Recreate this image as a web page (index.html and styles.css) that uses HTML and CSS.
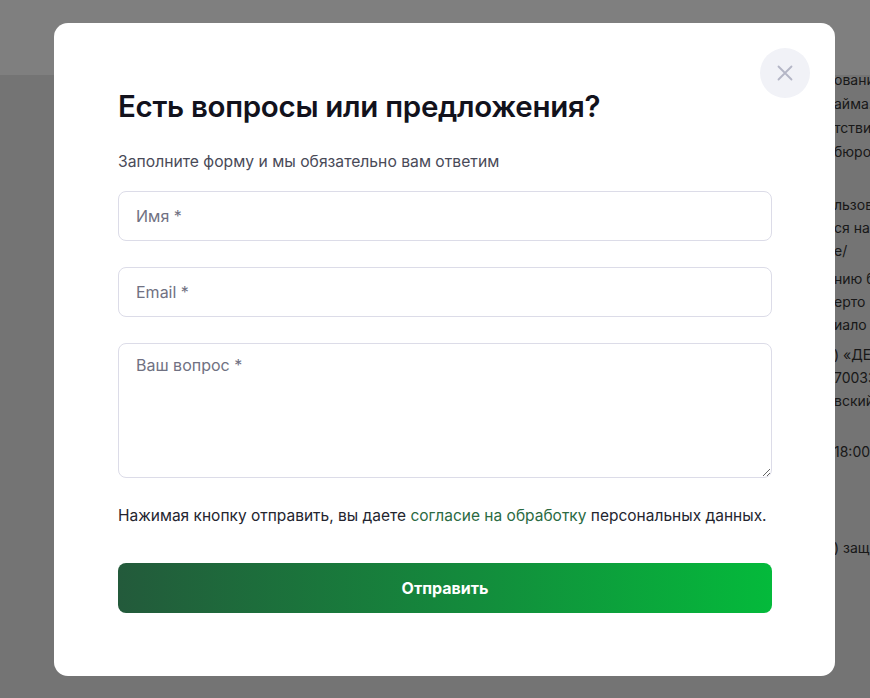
FILE: index.html
```html
<!DOCTYPE html>
<html lang="ru">
<head>
    <meta charset="UTF-8">
    <meta name="viewport" content="width=device-width, initial-scale=1.0">
    <title>Есть вопросы или предложения?</title>
    <link rel="stylesheet" href="styles.css">
</head>
<body>
<!-- Страница под модалкой -->
<div class="page">
    <header class="site-header"></header>
    <div class="page-text">
        <p class="b1">ования<br>айма.<br>тствии<br>бюро</p>
        <p class="b2">льзов<br>ся на<br>e/</p>
        <p class="b3">нию б<br>ерто<br>иало</p>
        <p class="b4">) «ДЕ<br>70033<br>вский</p>
        <p class="b5">18:00</p>
        <p class="b6">) защ</p>
    </div>
</div>

<!-- Затемнение + модалка -->
<div class="overlay">
    <div class="modal">
        <button class="close-btn" aria-label="Закрыть">
            <svg width="16" height="16" viewBox="0 0 16 16" fill="none">
                <path d="M1.5 1.5L14.5 14.5M14.5 1.5L1.5 14.5" stroke="#b4b6c6" stroke-width="1.8" stroke-linecap="round"/>
            </svg>
        </button>

        <h2 class="modal-title">Есть вопросы или предложения?</h2>
        <p class="modal-subtitle">Заполните форму и мы обязательно вам ответим</p>

        <form class="form">
            <input class="field" type="text" placeholder="Имя *">
            <input class="field" type="email" placeholder="Email *">
            <textarea class="field field-area" placeholder="Ваш вопрос *"></textarea>

            <p class="consent">Нажимая кнопку отправить, вы даете <a href="#">согласие на обработку</a> персональных данных.</p>

            <button class="submit-btn" type="button">Отправить</button>
        </form>
    </div>
</div>
</body>
</html>
```

FILE: styles.css
```css
/* Reset */
* {
    margin: 0;
    padding: 0;
    box-sizing: border-box;
}

body {
    font-family: Inter, "Noto Sans", sans-serif;
    background: #e8e8e8;
    overflow: hidden;
    height: 698px;
}

/* Страница на фоне */
.site-header {
    height: 75px;
    background: #fff;
}

.page-text {
    padding-left: 834px;
    white-space: nowrap;
    font-size: 14px;
    line-height: 23px;
    color: #333;
}

.page-text .b1 { margin-top: -7px; line-height: 24px; }
.page-text .b2 { margin-top: 29px; }
.page-text .b3 { margin-top: 5px; }
.page-text .b4 { margin-top: 7px; }
.page-text .b5 { margin-top: 28px; }
.page-text .b6 { margin-top: 73px; }

/* Затемнение */
.overlay {
    position: fixed;
    inset: 0;
    background: rgba(0, 0, 0, 0.5);
    padding: 23px 0 0 54px;
}

/* Модалка */
.modal {
    position: relative;
    width: 781px;
    height: 653px;
    background: #fff;
    border-radius: 14px;
    padding: 64px 63px 0 64px;
}

.close-btn {
    position: absolute;
    top: 25px;
    right: 25px;
    width: 50px;
    height: 50px;
    border: none;
    border-radius: 50%;
    background: #f1f2f7;
    display: flex;
    align-items: center;
    justify-content: center;
    cursor: pointer;
}

.modal-title {
    font-size: 29.5px;
    line-height: 38px;
    font-weight: 600;
    color: #12121c;
    letter-spacing: -0.3px;
}

.modal-subtitle {
    margin-top: 26px;
    font-size: 15.7px;
    line-height: 22px;
    color: #494a58;
}

/* Форма */
.form {
    margin-top: 18px;
    display: flex;
    flex-direction: column;
    gap: 26px;
}

.field {
    display: block;
    width: 100%;
    height: 50px;
    border: 1px solid #dcdce8;
    border-radius: 8px;
    padding: 0 17px;
    font-family: inherit;
    font-size: 16px;
    color: #12121c;
    background: #fff;
    outline: none;
}

.field::placeholder {
    color: #707182;
}

.field-area {
    height: 135px;
    padding-top: 10px;
    line-height: 22px;
    resize: vertical;
}

.consent {
    margin-top: 1px;
    font-size: 15.5px;
    line-height: 22px;
    color: #24252f;
    white-space: nowrap;
}

.consent a {
    color: #2b6a42;
    text-decoration: none;
}

.submit-btn {
    margin-top: 10px;
    height: 50px;
    border: none;
    border-radius: 8px;
    background: linear-gradient(90deg, #235a3b 0%, #138c3c 55%, #04ba3b 100%);
    color: #fff;
    font-family: inherit;
    font-size: 16px;
    font-weight: 700;
    cursor: pointer;
}
```
